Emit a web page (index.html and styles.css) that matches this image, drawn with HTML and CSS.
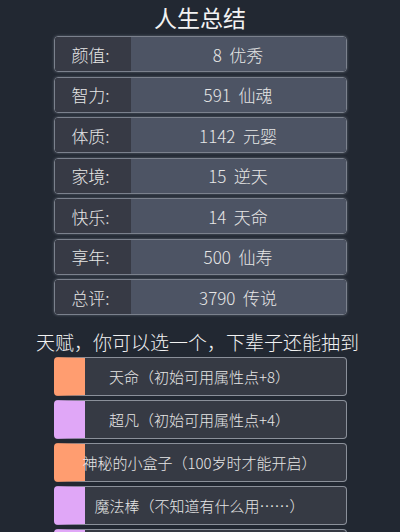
FILE: index.html
```html
<!DOCTYPE html>
<html lang="zh">
<head>
<meta charset="utf-8">
<link rel="stylesheet" href="styles.css">
</head>
<body>
<div class="page">
  <h1 class="title">人生总结</h1>
  <div class="stats">
    <div class="stat"><div class="stat-label">颜值:</div><div class="stat-value">8&nbsp; 优秀</div></div>
    <div class="stat"><div class="stat-label">智力:</div><div class="stat-value">591&nbsp; 仙魂</div></div>
    <div class="stat"><div class="stat-label">体质:</div><div class="stat-value">1142&nbsp; 元婴</div></div>
    <div class="stat"><div class="stat-label">家境:</div><div class="stat-value">15&nbsp; 逆天</div></div>
    <div class="stat"><div class="stat-label">快乐:</div><div class="stat-value">14&nbsp; 天命</div></div>
    <div class="stat"><div class="stat-label">享年:</div><div class="stat-value">500&nbsp; 仙寿</div></div>
    <div class="stat"><div class="stat-label">总评:</div><div class="stat-value">3790&nbsp; 传说</div></div>
  </div>
  <div class="heading">天赋，你可以选一个，下辈子还能抽到</div>
  <div class="talents">
    <div class="talent talent-orange">天命（初始可用属性点+8）</div>
    <div class="talent talent-purple">超凡（初始可用属性点+4）</div>
    <div class="talent talent-orange">神秘的小盒子（100岁时才能开启）</div>
    <div class="talent talent-purple">魔法棒（不知道有什么用……）</div>
    <div class="talent talent-purple"></div>
  </div>
</div>
</body>
</html>
```

FILE: styles.css
```css
html, body {
  margin: 0;
  padding: 0;
  background: #222832;
}
body {
  font-family: "Noto Sans CJK SC", "Noto Sans", sans-serif;
  font-weight: 300;
  color: #e6e6e6;
  overflow: hidden;
  height: 532px;
}
.page {
  width: 400px;
}
.title {
  margin: 0;
  font-size: 23px;
  font-weight: normal;
  line-height: 34px;
  text-align: center;
  color: #f2f2f2;
}
.stats {
  width: 293px;
  margin: 2px auto 0;
  display: flex;
  flex-direction: column;
  gap: 4.5px;
}
.stat {
  height: 36px;
  box-sizing: border-box;
  display: flex;
  border: 1px solid #7b818d;
  border-radius: 4px;
  overflow: hidden;
  box-shadow: 0 0 3px rgba(200, 210, 225, 0.35);
  font-size: 17px;
}
.stat-label {
  width: 76px;
  background: #373a45;
  display: flex;
  align-items: center;
  justify-content: center;
  padding-right: 4px;
  box-sizing: border-box;
}
.stat-value {
  flex: 1;
  background: #4d5464;
  display: flex;
  align-items: center;
  justify-content: center;
}
.heading {
  padding-top: 12px;
  line-height: 30px;
  font-size: 19px;
  text-align: center;
  white-space: nowrap;
  padding-right: 5px;
  color: #f2f2f2;
}
.talents {
  width: 293px;
  margin: 0 auto;
  display: flex;
  flex-direction: column;
  gap: 4px;
}
.talent {
  height: 39px;
  box-sizing: border-box;
  border: 1px solid #8b909a;
  border-left-width: 31px;
  border-radius: 4px;
  background: #363a44;
  display: flex;
  align-items: center;
  justify-content: center;
  padding-right: 31px;
  font-size: 15px;
  white-space: nowrap;
  color: #e6e6e6;
  flex-shrink: 0;
}
.talent-orange {
  border-left-color: #ff9d70;
}
.talent-purple {
  border-left-color: #e0a7f7;
}
```
